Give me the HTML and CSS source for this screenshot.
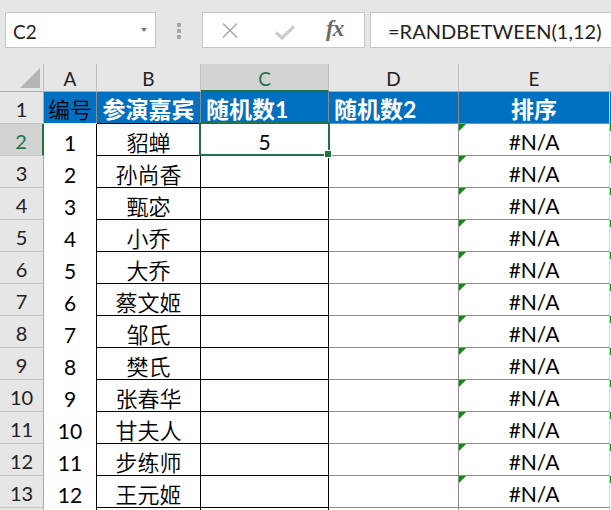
FILE: index.html
```html
<!DOCTYPE html>
<html>
<head>
<meta charset="utf-8">
<link rel="stylesheet" href="styles.css">
</head>
<body>
<div class="toolbar">
  <div class="namebox"><span class="nb-text">C2</span><span class="arrow"></span></div>
  <div class="grip"><i></i><i></i><i></i></div>
  <div class="fbtns">
    <svg class="ic-x" width="16" height="15" viewBox="0 0 16 15"><path d="M1 0.5 L15 14.5 M15 0.5 L1 14.5" stroke="#ababab" stroke-width="1.6" fill="none"/></svg>
    <svg class="ic-ok" width="20" height="15" viewBox="0 0 20 15"><path d="M1 7.5 L7 13 L19 1.5" stroke="#cbcbcb" stroke-width="3.2" fill="none"/></svg>
    <span class="fx">fx</span>
  </div>
  <div class="finput">=RANDBETWEEN(1,12)</div>
</div>
<div class="sheet">
  <div class="corner"><span class="tri"></span></div>
  <div class="ch">A</div>
  <div class="ch">B</div>
  <div class="ch ch-sel">C</div>
  <div class="ch">D</div>
  <div class="ch ch-e">E</div>
  <div class="ch ch-f"></div>

  <div class="rh">1</div>
  <div class="h1 h1-a">编号</div>
  <div class="h1 h1-b">参演嘉宾</div>
  <div class="h1 h1-c">随机数1</div>
  <div class="h1 h1-d">随机数2</div>
  <div class="h1 h1-e">排序</div>
  <div class="cf cf-h"></div>

  <div class="rh rh-sel">2</div>
  <div class="c ca">1</div><div class="c cb">貂蝉</div><div class="c cc sel">5</div><div class="c cd"></div><div class="c ce">#N/A</div><div class="cf"></div>

  <div class="rh">3</div>
  <div class="c ca">2</div><div class="c cb">孙尚香</div><div class="c cc"></div><div class="c cd"></div><div class="c ce">#N/A</div><div class="cf"></div>

  <div class="rh">4</div>
  <div class="c ca">3</div><div class="c cb">甄宓</div><div class="c cc"></div><div class="c cd"></div><div class="c ce">#N/A</div><div class="cf"></div>

  <div class="rh">5</div>
  <div class="c ca">4</div><div class="c cb">小乔</div><div class="c cc"></div><div class="c cd"></div><div class="c ce">#N/A</div><div class="cf"></div>

  <div class="rh">6</div>
  <div class="c ca">5</div><div class="c cb">大乔</div><div class="c cc"></div><div class="c cd"></div><div class="c ce">#N/A</div><div class="cf"></div>

  <div class="rh">7</div>
  <div class="c ca">6</div><div class="c cb">蔡文姬</div><div class="c cc"></div><div class="c cd"></div><div class="c ce">#N/A</div><div class="cf"></div>

  <div class="rh">8</div>
  <div class="c ca">7</div><div class="c cb">邹氏</div><div class="c cc"></div><div class="c cd"></div><div class="c ce">#N/A</div><div class="cf"></div>

  <div class="rh">9</div>
  <div class="c ca">8</div><div class="c cb">樊氏</div><div class="c cc"></div><div class="c cd"></div><div class="c ce">#N/A</div><div class="cf"></div>

  <div class="rh">10</div>
  <div class="c ca">9</div><div class="c cb">张春华</div><div class="c cc"></div><div class="c cd"></div><div class="c ce">#N/A</div><div class="cf"></div>

  <div class="rh">11</div>
  <div class="c ca">10</div><div class="c cb">甘夫人</div><div class="c cc"></div><div class="c cd"></div><div class="c ce">#N/A</div><div class="cf"></div>

  <div class="rh">12</div>
  <div class="c ca">11</div><div class="c cb">步练师</div><div class="c cc"></div><div class="c cd"></div><div class="c ce">#N/A</div><div class="cf"></div>

  <div class="rh">13</div>
  <div class="c ca">12</div><div class="c cb">王元姬</div><div class="c cc"></div><div class="c cd"></div><div class="c ce">#N/A</div><div class="cf"></div>

  <div class="rh rh-end"></div>
  <div class="c ca end"></div><div class="c cb end"></div><div class="c cc end"></div><div class="c cd end"></div><div class="c ce end"></div><div class="cf end"></div>
</div>
</body>
</html>
```

FILE: styles.css
```css
html, body {
  margin: 0;
  padding: 0;
  width: 611px;
  height: 510px;
  overflow: hidden;
  background: #ffffff;
  font-family: "Lato", "Noto Sans CJK SC", sans-serif;
}

.toolbar {
  height: 64px;
  box-sizing: border-box;
  background: #e6e6e6;
  display: flex;
  align-items: flex-start;
  padding: 12px 0 0 5px;
  white-space: nowrap;
}

.namebox {
  width: 151px;
  height: 36px;
  box-sizing: border-box;
  background: #fff;
  border: 1px solid #c6c6c6;
  display: flex;
  align-items: center;
  justify-content: space-between;
  padding: 2px 8px 0 7px;
  font-size: 19px;
  color: #222;
}

.arrow {
  width: 0;
  height: 0;
  border-left: 3.5px solid transparent;
  border-right: 3.5px solid transparent;
  border-top: 4px solid #777;
  margin-top: -2px;
}

.grip {
  width: 4px;
  margin: 11px 21px 0 21px;
  display: flex;
  flex-direction: column;
  gap: 2.5px;
}

.grip i {
  display: block;
  width: 4px;
  height: 3.5px;
  background: #a6a6a6;
}

.fbtns {
  width: 163px;
  height: 36px;
  box-sizing: border-box;
  background: #fff;
  border: 1px solid #c6c6c6;
  display: flex;
  align-items: center;
  padding-left: 19px;
}

.ic-x { margin-top: 1px; }
.ic-ok { margin-left: 37px; margin-top: 4px; }

.fx {
  margin-left: 31px;
  font-family: "Liberation Serif", "DejaVu Serif", serif;
  font-style: italic;
  font-weight: bold;
  font-size: 23px;
  color: #6a6a6a;
  letter-spacing: -1px;
  margin-top: -2px;
}

.finput {
  margin-left: 5px;
  flex: 1;
  height: 36px;
  box-sizing: border-box;
  background: #fff;
  border: 1px solid #c6c6c6;
  border-right: none;
  display: flex;
  align-items: center;
  padding: 2px 0 0 17px;
  font-size: 20px;
  color: #222;
  overflow: hidden;
}

.sheet {
  display: grid;
  grid-template-columns: 44px 53px 104px 128px 130px 151px 1px;
  grid-template-rows: 28px repeat(13, 32px) 10px;
}

.sheet > div {
  box-sizing: border-box;
  display: flex;
  align-items: center;
  justify-content: center;
  overflow: hidden;
  white-space: nowrap;
}

.sheet .corner {
  background: #e6e6e6;
  border-right: 1px solid #bfbfbf;
  border-bottom: 1px solid #ababab;
  position: relative;
}

.tri {
  position: absolute;
  right: 3px;
  bottom: 3px;
  width: 0;
  height: 0;
  border-left: 20px solid transparent;
  border-bottom: 20px solid #b4b4b4;
}

.ch {
  background: #e6e6e6;
  border-right: 1px solid #bfbfbf;
  border-bottom: 1px solid #ababab;
  font-size: 19px;
  color: #222;
  padding-top: 2px;
}

.ch-sel {
  background: #d2d2d2;
  border-bottom: 2px solid #217346;
  color: #217346;
}

.ch-e { border-right: 1px solid #d4d4d4; }
.ch-f { border-right: none; }

.rh {
  background: #e6e6e6;
  border-right: 1px solid #ababab;
  border-bottom: 1px solid #c6c6c6;
  font-size: 20px;
  color: #222;
  padding-top: 3px;
}

.rh-sel {
  background: #d2d2d2;
  border-right: 2px solid #217346;
  color: #217346;
}

.h1 {
  background: #0070c0;
  border-right: 1px solid #8c8c8c;
  border-bottom: 1px solid #8c8c8c;
  color: #fff;
  font-weight: bold;
  font-size: 23px;
  padding-top: 1px;
}

.h1-a {
  font-weight: 350;
  color: #000;
  font-size: 22px;
  border-bottom-color: #ffffff;
}

.h1-b, .h1-c { border-bottom-color: #000; }

.sheet .h1-c, .sheet .h1-d {
  justify-content: flex-start;
  padding-left: 5px;
}

.h1-e { border-right-color: #d4d4d4; }

.c {
  background: #fff;
  font-size: 21px;
  color: #000;
  padding-top: 4px;
}

.ca {
  border-right: 1px solid #000;
}

.cb {
  border-right: 1px solid #000;
  border-bottom: 1px solid #000;
  font-size: 22px;
  font-weight: 350;
  padding-top: 2px;
}

.cc {
  border-right: 1px solid #000;
  border-bottom: 1px solid #000;
}

.cd {
  border-right: 1px solid #8c8c8c;
  border-bottom: 1px solid #8c8c8c;
}

.ce {
  border-right: 1px solid #d4d4d4;
  border-bottom: 1px solid #8c8c8c;
  position: relative;
}

.ce::before {
  content: "";
  position: absolute;
  left: 0;
  top: 0;
  width: 0;
  height: 0;
  border-top: 7px solid #0e8a0e;
  border-right: 7px solid transparent;
}

.cf {
  background: #fff;
  position: relative;
}

.cf::before {
  content: "";
  position: absolute;
  left: 0;
  top: 0;
  width: 1px;
  height: 7px;
  background: #0e8a0e;
}

.cf-h {
  background: #0070c0;
}

.cf-h::before, .cf.end::before, .ce.end::before { display: none; }

.rh-end { border-bottom: none; }
.end { border-bottom: none !important; }

.sel {
  position: relative;
  overflow: visible !important;
}

.sel::after {
  content: "";
  position: absolute;
  left: -2px;
  top: -2px;
  right: -2px;
  bottom: -1px;
  border: 2px solid #217346;
  pointer-events: none;
}

.sel::before {
  content: "";
  position: absolute;
  right: -4px;
  bottom: -3px;
  width: 6px;
  height: 6px;
  background: #217346;
  border: 1px solid #fff;
  z-index: 2;
}
```
